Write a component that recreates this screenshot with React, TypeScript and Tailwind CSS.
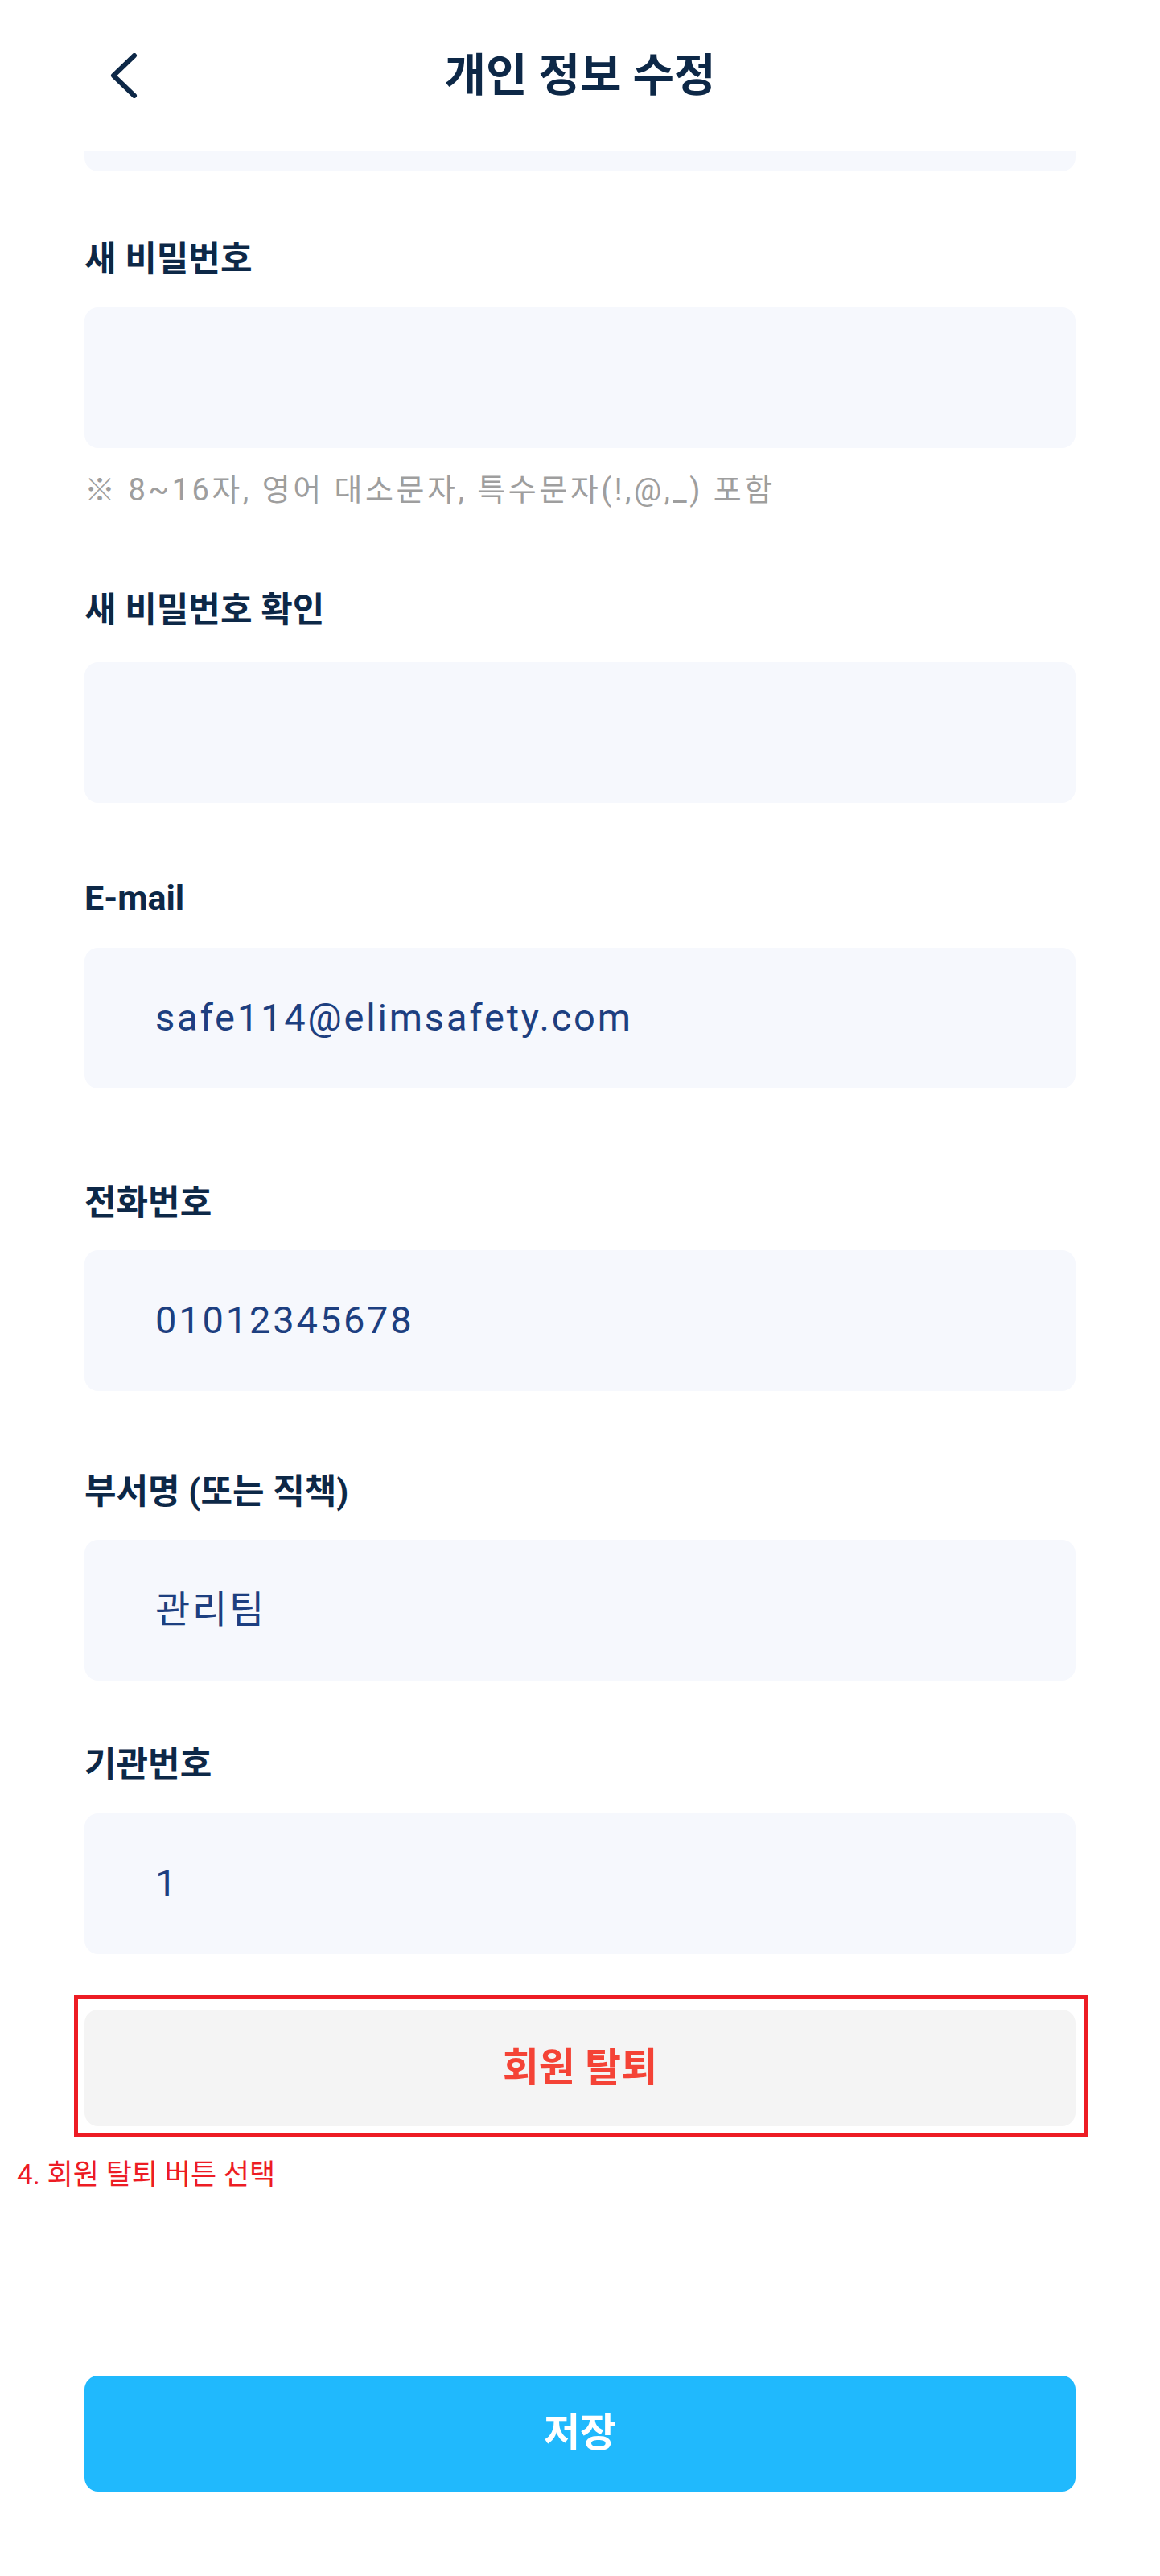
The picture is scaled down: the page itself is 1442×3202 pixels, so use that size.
import React from "react";

const inputCls =
  "h-[175px] w-full rounded-[17px] bg-[#f6f8fd] flex items-center pl-[88px] text-[47px] tracking-[0.06em] text-[#1d3f80]";
const labelCls = "h-[40px] leading-[40px] text-[43px] font-bold text-[#0d2847] whitespace-nowrap";

export default function App() {
  return (
    <div className="relative w-[1442px] h-[3202px] overflow-hidden bg-white font-['Roboto','Noto_Sans_CJK_KR',sans-serif]">
      <header className="grid h-[188px] grid-cols-[1fr_auto_1fr] items-center">
        <div className="pl-[134px]">
          <svg width="40" height="56" viewBox="0 0 40 56" fill="none">
            <polyline
              points="33,3 7,28 33,53"
              stroke="#0d2847"
              strokeWidth="6"
              strokeLinecap="round"
              strokeLinejoin="round"
            />
          </svg>
        </div>
        <h1 className="text-[56px] font-bold leading-none text-[#0d2847]">개인 정보 수정</h1>
        <div />
      </header>

      <main className="flex flex-col px-[105px]">
        <div className="h-[25px] w-full rounded-b-[17px] bg-[#f6f8fd]" />

        <div className={`mt-[89px] ${labelCls}`}>새 비밀번호</div>
        <div className={`mt-[40px] ${inputCls}`} />
        <p className="mt-[32px] h-[40px] leading-[40px] text-[38px] tracking-[3.5px] text-[#9e9e9e] whitespace-nowrap">
          ※ 8~16자, 영어 대소문자, 특수문자(!,@,_) 포함
        </p>

        <div className={`mt-[109px] ${labelCls}`}>새 비밀번호 확인</div>
        <div className={`mt-[45px] ${inputCls}`} />

        <div className={`mt-[98px] ${labelCls}`}>E-mail</div>
        <div className={`mt-[42px] ${inputCls}`}>safe114@elimsafety.com</div>

        <div className={`mt-[122px] ${labelCls}`}>전화번호</div>
        <div className={`mt-[39px] ${inputCls}`}>01012345678</div>

        <div className={`mt-[105px] ${labelCls}`}>부서명 (또는 직책)</div>
        <div className={`mt-[40px] ${inputCls}`}>관리팀</div>

        <div className={`mt-[84px] ${labelCls}`}>기관번호</div>
        <div className={`mt-[41px] ${inputCls}`}>1</div>

        <div className="relative mt-[69px]">
          <button className="flex h-[145px] w-full items-center justify-center rounded-[17px] bg-[#f4f4f4] text-[49px] font-bold text-[#f44336]">
            회원 탈퇴
          </button>
          <span className="pointer-events-none absolute top-[-18px] left-[-13px] right-[-15px] bottom-[-13px] border-[5px] border-[#ed1c24]" />
        </div>
      </main>

      <p className="mt-[41px] ml-[21px] h-[40px] leading-[40px] text-[35px] text-[#ed1c24] whitespace-nowrap">
        4. 회원 탈퇴 버튼 선택
      </p>

      <div className="px-[105px]">
        <button className="mt-[229px] flex h-[144px] w-full items-center justify-center rounded-[17px] bg-[#20b9fd] text-[49px] font-bold text-white">
          저장
        </button>
      </div>
    </div>
  );
}
